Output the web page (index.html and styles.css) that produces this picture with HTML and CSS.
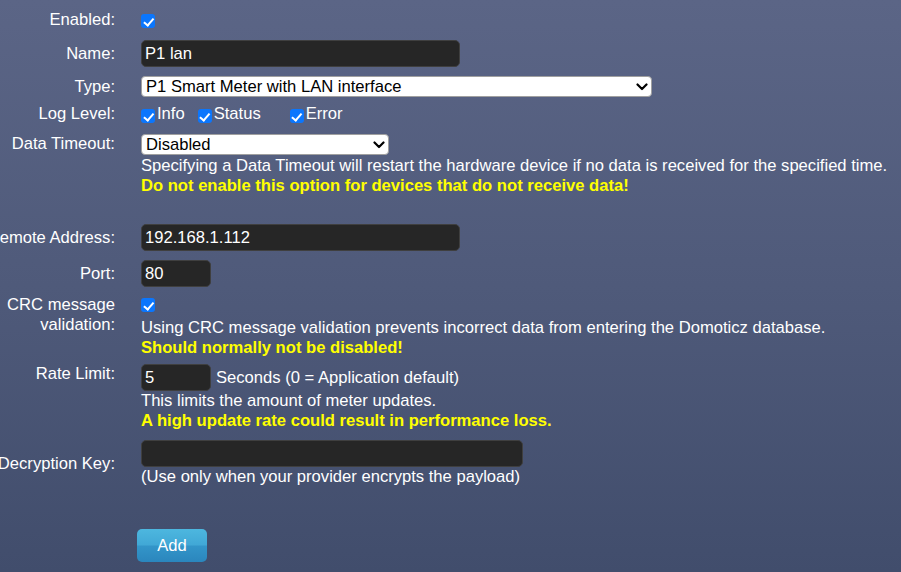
FILE: index.html
```html
<!DOCTYPE html>
<html>
<head>
<meta charset="utf-8">
<link rel="stylesheet" href="styles.css">
</head>
<body>
<form class="form">
  <div class="row r-enabled">
    <label class="lbl">Enabled:</label>
    <div class="cell"><input type="checkbox" class="cb cb-top" checked></div>
  </div>
  <div class="row r-name">
    <label class="lbl lbl-input">Name:</label>
    <div class="cell"><input type="text" class="txt w-name" value="P1 lan"></div>
  </div>
  <div class="row r-type">
    <label class="lbl lbl-select">Type:</label>
    <div class="cell">
      <div class="selwrap w-type">
        <select class="sel"><option>P1 Smart Meter with LAN interface</option></select>
        <svg class="chev" width="12" height="8" viewBox="0 0 12 8"><path d="M1.5 1.5 L6 6 L10.5 1.5" fill="none" stroke="#000" stroke-width="2.2" stroke-linecap="round" stroke-linejoin="round"/></svg>
      </div>
    </div>
  </div>
  <div class="row r-log">
    <label class="lbl">Log Level:</label>
    <div class="cell loglevels">
      <span class="lv"><input type="checkbox" class="cb" checked><span class="lvtext">Info</span></span>
      <span class="lv lv2"><input type="checkbox" class="cb" checked><span class="lvtext">Status</span></span>
      <span class="lv lv3"><input type="checkbox" class="cb" checked><span class="lvtext">Error</span></span>
    </div>
  </div>
  <div class="row r-timeout">
    <label class="lbl">Data Timeout:</label>
    <div class="cell">
      <div class="selwrap w-timeout">
        <select class="sel"><option>Disabled</option></select>
        <svg class="chev" width="12" height="8" viewBox="0 0 12 8"><path d="M1.5 1.5 L6 6 L10.5 1.5" fill="none" stroke="#000" stroke-width="2.2" stroke-linecap="round" stroke-linejoin="round"/></svg>
      </div>
      <div class="help help-first">Specifying a Data Timeout will restart the hardware device if no data is received for the specified time.</div>
      <div class="warn">Do not enable this option for devices that do not receive data!</div>
    </div>
  </div>
  <div class="row r-addr">
    <label class="lbl lbl-input">Remote Address:</label>
    <div class="cell"><input type="text" class="txt w-name" value="192.168.1.112"></div>
  </div>
  <div class="row r-port">
    <label class="lbl lbl-input">Port:</label>
    <div class="cell"><input type="text" class="txt w-port" value="80"></div>
  </div>
  <div class="row r-crc">
    <label class="lbl lbl-wrap">CRC message<br>validation:</label>
    <div class="cell">
      <div class="cbline"><input type="checkbox" class="cb cb-crc" checked></div>
      <div class="help">Using CRC message validation prevents incorrect data from entering the Domoticz database.</div>
      <div class="warn">Should normally not be disabled!</div>
    </div>
  </div>
  <div class="row r-rate">
    <label class="lbl">Rate Limit:</label>
    <div class="cell">
      <div class="inline"><input type="text" class="txt w-port" value="5"><span class="unit">Seconds (0 = Application default)</span></div>
      <div class="help">This limits the amount of meter updates.</div>
      <div class="warn">A high update rate could result in performance loss.</div>
    </div>
  </div>
  <div class="row r-key">
    <label class="lbl lbl-mid">Decryption Key:</label>
    <div class="cell">
      <input type="text" class="txt w-key" value="">
      <div class="help">(Use only when your provider encrypts the payload)</div>
    </div>
  </div>
  <div class="row r-btn">
    <div></div>
    <div class="cell"><button type="button" class="btn">Add</button></div>
  </div>
</form>
</body>
</html>
```
FILE: styles.css
```css
html, body {
  margin: 0;
  padding: 0;
  height: 100%;
}
body {
  background: linear-gradient(to bottom, #5b6586 0%, #4f5a7a 50%, #414d6c 100%);
  font-family: "Liberation Sans", Arial, sans-serif;
  font-size: 16.6px;
  color: #ffffff;
  overflow: hidden;
}
.form {
  padding-top: 10px;
}
.row {
  display: grid;
  grid-template-columns: 115px 1fr;
  column-gap: 26px;
  align-items: start;
}
.lbl {
  display: flex;
  justify-content: flex-end;
  white-space: nowrap;
  line-height: 20px;
  text-align: right;
}
.lbl-input { line-height: 27px; }
.lbl-select { line-height: 21px; }
.lbl-wrap { line-height: 20px; display: block; }
.lbl-mid { align-self: center; }
.cell {
  line-height: 20px;
}

.cb {
  appearance: none;
  -webkit-appearance: none;
  position: relative;
  box-sizing: border-box;
  width: 14px;
  height: 14px;
  margin: 0;
  border: none;
  border-radius: 3px;
  background: #0b76fd;
  display: block;
}
.cb::after {
  content: "";
  position: absolute;
  left: 4.5px;
  top: 1.5px;
  width: 3.5px;
  height: 7.5px;
  border-right: 2.3px solid #ffffff;
  border-bottom: 2.3px solid #ffffff;
  transform: rotate(40deg);
}
.cb-top { margin-top: 4px; }
.cbline { height: 20px; }
.cb-crc { margin-top: 3px; }

.txt {
  box-sizing: border-box;
  height: 27px;
  background: #262626;
  border: 1px solid #3f3f3f;
  border-radius: 5px;
  color: #ffffff;
  font-family: "Liberation Sans", Arial, sans-serif;
  font-size: 16.6px;
  padding: 0 3px;
  margin: 0;
  display: block;
}
.w-name { width: 319px; }
.w-port { width: 70px; }
.w-key { width: 382px; }

.selwrap {
  position: relative;
  height: 21px;
}
.sel {
  appearance: none;
  -webkit-appearance: none;
  box-sizing: border-box;
  width: 100%;
  height: 21px;
  background: #ffffff;
  border: 1px solid #a0a0a0;
  border-radius: 4px;
  color: #000000;
  font-family: "Liberation Sans", Arial, sans-serif;
  font-size: 16.6px;
  line-height: 19px;
  padding: 0 0 0 4px;
  margin: 0;
  display: block;
}
.chev {
  position: absolute;
  right: 4px;
  top: 7px;
  pointer-events: none;
}
.w-type { width: 511px; }
.w-timeout { width: 248px; }

.loglevels {
  display: flex;
  align-items: flex-start;
}
.lv {
  display: flex;
  align-items: flex-start;
}
.lv .cb { margin-top: 5px; }
.lvtext { margin-left: 2px; }
.lv2 { margin-left: 13px; }
.lv3 { margin-left: 29px; }

.help { color: #ffffff; }
.help-first { margin-top: 1px; }
.warn {
  color: #ffff00;
  font-weight: bold;
}
.inline {
  display: flex;
  align-items: center;
}
.unit { margin-left: 5px; }

.r-name { margin-top: 10px; }
.r-type { margin-top: 9px; }
.r-log { margin-top: 7px; }
.r-timeout { margin-top: 10px; }
.r-addr { margin-top: 28px; }
.r-port { margin-top: 9px; }
.r-crc { margin-top: 8px; }
.r-rate { margin-top: 6px; }
.r-key { margin-top: 9px; }
.r-btn { margin-top: 42px; }

.btn {
  margin-left: -4px;
  width: 70px;
  height: 33px;
  border: none;
  border-radius: 5px;
  background: linear-gradient(to bottom, #4db7df 0%, #41a8d6 48%, #3395c9 52%, #2b86bd 100%);
  color: #ffffff;
  font-family: "Liberation Sans", Arial, sans-serif;
  font-size: 16.6px;
  padding: 0;
}
```
